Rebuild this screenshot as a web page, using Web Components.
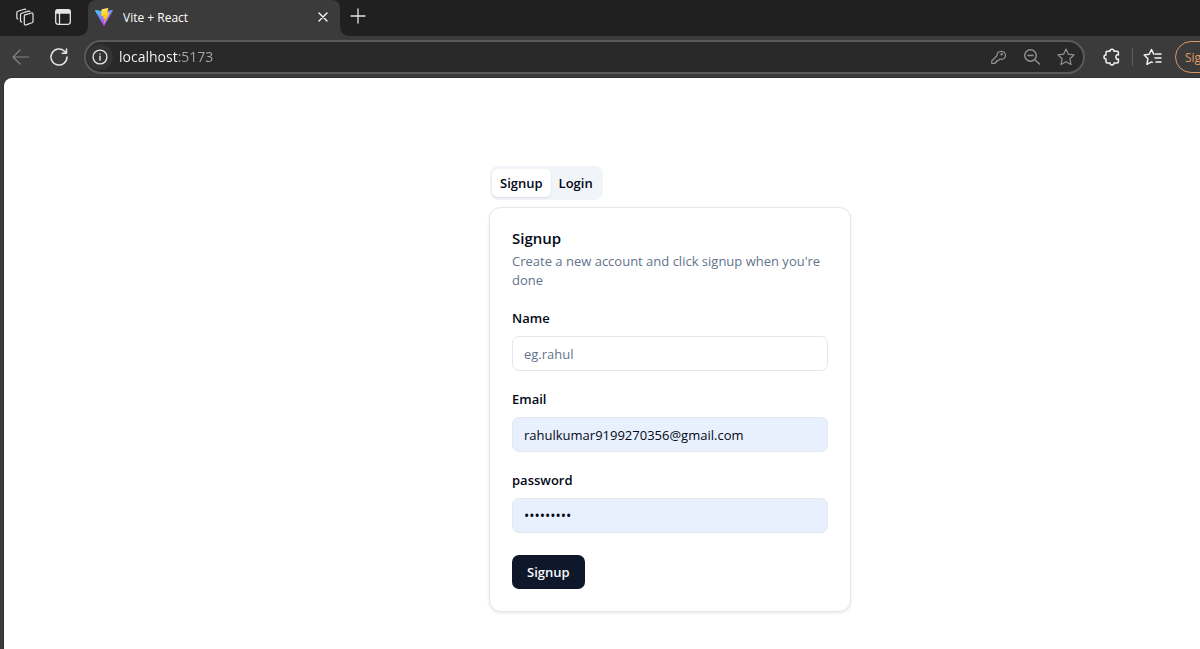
<!DOCTYPE html>
<html lang="en">
<head>
<meta charset="utf-8">
<meta name="viewport" content="width=device-width, initial-scale=1">
<title>Vite + React</title>
<style>
html, body { margin: 0; }
body { font-family: "Open Sans", "Noto Sans", sans-serif; font-size: 13px; line-height: 19px; background: #3b3b3b; }
</style>
</head>
<body>
<browser-window>
  <tab-strip slot="tabs"></tab-strip>
  <nav-toolbar slot="toolbar"></nav-toolbar>
  <auth-page>
    <auth-tabs></auth-tabs>
    <auth-card heading="Signup" description="Create a new account and click signup when you're done" action="Signup">
      <form-field label="Name" placeholder="eg.rahul"></form-field>
      <form-field label="Email" type="email" value="rahulkumar9199270356@gmail.com" filled></form-field>
      <form-field label="password" type="password" value="rahul1234" filled></form-field>
    </auth-card>
  </auth-page>
</browser-window>
<script>
const define = (name, html, setup) => customElements.define(name, class extends HTMLElement {
  constructor() {
    super();
    this.attachShadow({ mode: "open" }).innerHTML = html;
  }
  connectedCallback() { if (setup) setup(this, this.shadowRoot); }
});

const buttonReset = `
  *, *::before, *::after { box-sizing: border-box; }
  button { font: inherit; color: inherit; border: 0; padding: 0; margin: 0; background: none; }
  svg { display: block; fill: none; stroke: currentColor; stroke-linecap: round; stroke-linejoin: round; }`;

define("browser-window", `
  <style>
    :host { display: flex; flex-direction: column; min-height: 100vh; }
    main { flex: 1; display: flex; margin-left: 4px; background: #fff; border-top-left-radius: 8px; box-shadow: 0 0 0 1px #303030; }
    main ::slotted(*) { flex: 1; }
  </style>
  <slot name="tabs"></slot><slot name="toolbar"></slot><main><slot></slot></main>`);

define("tab-strip", `
  <style>${buttonReset}
    :host { display: flex; height: 36px; background: #202020; color: #e4e4e4; }
    .tools { display: flex; align-items: center; gap: 18px; padding: 0 15px 2px; width: 88px; }
    .tab { position: relative; display: flex; align-items: center; gap: 10px; width: 252px; padding: 0 10px 2px 7px; background: #3b3b3b; color: #fff; border-radius: 8px 8px 0 0; font-size: 12px; }
    .tab::before, .tab::after { content: ""; position: absolute; bottom: 0; width: 8px; height: 8px; }
    .tab::before { right: 100%; background: radial-gradient(circle at 0 0, #202020 7px, #3b3b3b 8px); }
    .tab::after { left: 100%; background: radial-gradient(circle at 100% 0, #202020 7px, #3b3b3b 8px); }
    .title { flex: 1; }
    .new { padding: 0 9px 4px; }
  </style>
  <div class="tools">
    <button aria-label="Workspaces"><svg width="20" height="20" viewBox="0 0 20 20" stroke-width="1.2"><path d="M10 7.8 16.5 6q1.500-.3 1.500 1.200v7q0 1-1 1.500l-6 2.200q-1.700.500-1.700-1.200V9q0-1 .700-1.200z"/><path d="M6.700 14.800q-1.200 0-1.200-1.300V7.800q0-1.200 1.100-1.600l6.900-2.100q1-.2 1.400.5"/><path d="M3 12q-1.200 0-1.200-1.300V5.800q0-1.200 1.100-1.600l6.400-2q1-.2 1.400.5"/></svg></button>
    <button aria-label="Tab actions"><svg width="20" height="20" viewBox="0 0 20 20" stroke-width="1.300"><rect x="2.700" y="2.700" width="14.600" height="14.600" rx="2.500"/><path d="M3 4.500Q3 3 4.500 3h11Q17 3 17 4.500V6H3z" fill="currentColor"/><path d="M6.500 6v11"/></svg></button>
  </div>
  <div class="tab">
    <svg width="18" height="18" viewBox="0 0 32 32" style="stroke:none">
      <defs>
        <linearGradient id="v" x1="0" y1="0" x2=".6" y2="1"><stop stop-color="#41d1ff"/><stop offset="1" stop-color="#bd34fe"/></linearGradient>
        <linearGradient id="b" x1=".4" y1="0" x2=".6" y2="1"><stop stop-color="#ffea83"/><stop offset=".2" stop-color="#ffdd35"/><stop offset="1" stop-color="#ffa800"/></linearGradient>
      </defs>
      <path fill="url(#v)" d="M31.700 5 17 31.200a1.100 1.100 0 0 1-1.900 0L.200 5A1.100 1.100 0 0 1 1.400 3.400L16 6l14.500-2.600A1.100 1.100 0 0 1 31.700 5z"/>
      <path fill="url(#b)" d="m23 .1-10.900 2.100q-.4.100-.4.500L11 14q0 .7.700.7l3-.7q.7-.1.600.6l-.9 4.400q-.1.700.600.6l1.900-.6q.7-.1.600.6L16 26.500q-.1 1.200.8.400L26 8.600q.3-.8-.6-.8l-3.100.6q-.7 0-.6-.7l2-7q.1-.7-.7-.6z"/>
    </svg>
    <span class="title">Vite + React</span>
    <button aria-label="Close tab"><svg width="14" height="14" viewBox="0 0 14 14" stroke-width="1.300"><path d="m3 3 8 8m0-8-8 8"/></svg></button>
  </div>
  <button class="new" aria-label="New tab"><svg width="18" height="18" viewBox="0 0 18 18" stroke-width="1.300"><path d="M9 2v14M2 9h14"/></svg></button>`);

define("nav-toolbar", `
  <style>${buttonReset}
    :host { display: flex; align-items: center; height: 42px; padding-left: 11px; background: #3b3b3b; color: #e4e4e4; overflow: hidden; }
    svg { width: 20px; height: 20px; stroke-width: 1.200px; }
    .nav { display: flex; gap: 18px; width: 73px; flex: none; }
    .back { color: #858585; }
    .address { flex: 1; display: flex; align-items: center; height: 34px; padding: 0 7px 0 1px; border: 2px solid #5a5a5a; border-radius: 17px; background: #292929; }
    .info { padding: 4px; border-radius: 50%; background: #333; }
    input { flex: 1; min-width: 0; height: 20px; margin: 0 0 0 6px; border: 0; padding: 0; outline: 0; color: transparent; font: inherit; font-size: 14px; line-height: 20px; background: linear-gradient(90deg, #fff 59px, #a8a8a8 59px); -webkit-background-clip: text; background-clip: text; }
    .inside { display: flex; gap: 14px; color: #929292; }
    .outside { display: flex; align-items: center; flex: none; width: 115px; padding-left: 17px; color: #f2f2f2; }
    .outside > * { flex: none; }
    .line { width: 1px; height: 18px; margin: 0 10px; background: #5e5e5e; }
    .sign { width: 76px; height: 32px; margin-left: 12px; padding-left: 9px; border: 1px solid #dc9662; border-radius: 16px; text-align: left; white-space: nowrap; color: #e39a63; font-size: 12px; }
  </style>
  <div class="nav">
    <button class="back" aria-label="Back"><svg viewBox="0 0 20 20"><path d="M17.500 10H2m7-7-7 7 7 7"/></svg></button>
    <button aria-label="Refresh"><svg viewBox="0 0 20 20" style="stroke-width:1.500px"><path d="M18 10a8 8 0 1 1-2.500-5.800L17.500 6M17.500 2v4.200h-4.300"/></svg></button>
  </div>
  <div class="address">
    <button class="info" aria-label="Site information"><svg viewBox="0 0 20 20" style="width:18px;height:18px"><circle cx="10" cy="10" r="7.700" stroke-width="1.500"/><path d="M10 9v4.500M10 6.600v.1" stroke-width="1.600"/></svg></button>
    <input type="text" aria-label="Address" value="localhost:5173" spellcheck="false">
    <div class="inside">
      <button aria-label="Saved passwords"><svg viewBox="0 0 20 20"><path d="M12.300 4.500a4 4 0 1 1 .9 7.800l-1.400-.3-1.500 1.600H8.600v1.600H7v1.300H3.800v-2.700l5.200-5A4 4 0 0 1 12.300 4.500z"/><circle cx="13.600" cy="7.300" r=".6"/></svg></button>
      <button aria-label="Zoom out"><svg viewBox="0 0 20 20" style="stroke-width:1.400px"><circle cx="8.500" cy="8.500" r="5.800"/><path d="m13 13 4.500 4M6 8.500h5"/></svg></button>
      <button aria-label="Add to favorites"><svg viewBox="0 0 20 20"><path d="m10 2 2.400 5.200 5.700.7-4.200 3.900 1.100 5.700-5-2.800-5 2.800 1.100-5.700-4.200-3.900 5.700-.7z"/></svg></button>
    </div>
  </div>
  <div class="outside">
    <button aria-label="Extensions"><svg viewBox="0 0 20 20" style="stroke-width:1.500px"><path d="M5.200 4.200H8a2 2 0 0 1 4 0h3.200q1.200 0 1.200 1.200v2.500q-2.300-.6-2.600 2.100.3 2.700 2.600 2.100v2.600q0 1.200-1.200 1.200H12a2 2 0 0 1-4 0H5.200Q4 15.900 4 14.700V12a2 2 0 0 1 0-4V5.400q0-1.200 1.200-1.200z"/></svg></button>
    <span class="line"></span>
    <button aria-label="Favorites"><svg viewBox="0 0 20 20" style="stroke-width:1.500px"><path d="m10.800 7.300L8.500 2.500 6.200 7.300l-5 .7 3.700 3.800-1 5.500 4.600-2.400.8.400M12.500 7H18m-6 4h6m-5 4h5"/></svg></button>
    <button class="sign">Sign in</button>
  </div>`);

define("auth-page", `
  <style>
    :host { display: flex; flex-direction: column; align-items: center; gap: 7px; box-sizing: border-box; padding: 88px 0 36px 136px; }
    ::slotted(*) { width: 362px; max-width: 100%; }
  </style><slot></slot>`);

define("auth-tabs", `
  <style>${buttonReset}
    :host { display: flex; }
    div { display: flex; margin-left: 1px; padding: 3px 2px; border-radius: 8px; background: #f1f5f9; color: #020817; font-weight: 600; }
    button { height: 28px; padding: 0 8px; border-radius: 6px; }
    [aria-selected=true] { background: #fff; box-shadow: 0 1px 2px #0000001a; }
  </style>
  <div role="tablist"><button role="tab" aria-selected="true">Signup</button><button role="tab" aria-selected="false">Login</button></div>`);

define("auth-card", `
  <style>${buttonReset}
    :host { display: block; box-sizing: border-box; padding: 19px 22px 22px; border: 1px solid #e2e8f0; border-radius: 12px; background: #fff; color: #020817; box-shadow: 0 1px 3px #0000001a; }
    h1 { margin: 0; font-size: 15px; line-height: 22px; font-weight: 600; }
    p { margin: 3px 0 19px; color: #64748b; }
    form { display: grid; gap: 19px; justify-items: start; }
    ::slotted(*) { width: 100%; }
    button { height: 34px; margin-top: 3px; padding: 0 15px; border-radius: 7px; background: #0f172a; color: #f8fafc; font-weight: 600; }
  </style>
  <h1></h1><p></p>
  <form><slot></slot><button type="button"></button></form>`,
  (host, root) => {
    root.querySelector("h1").textContent = host.getAttribute("heading");
    root.querySelector("p").textContent = host.getAttribute("description");
    root.querySelector("button").textContent = host.getAttribute("action");
  });

define("form-field", `
  <style>
    :host { display: grid; gap: 8px; }
    label { line-height: 19px; font-weight: 600; }
    input { box-sizing: border-box; width: 100%; height: 35px; margin: 0; padding: 0 11px; border: 1px solid #e2e8f0; border-radius: 7px; outline: 0; background: #fff; color: #020817; font: inherit; }
    input::placeholder { color: #64748b; opacity: 1; }
    input[type=password] { font-size: 14px; }
    :host([filled]) input { background: #e8f0fe; }
  </style>
  <label for="field"></label><input id="field">`,
  (host, root) => {
    root.querySelector("label").textContent = host.getAttribute("label");
    const input = root.querySelector("input");
    input.type = host.getAttribute("type") || "text";
    input.placeholder = host.getAttribute("placeholder") || "";
    input.value = host.getAttribute("value") || "";
  });
</script>
</body>
</html>
